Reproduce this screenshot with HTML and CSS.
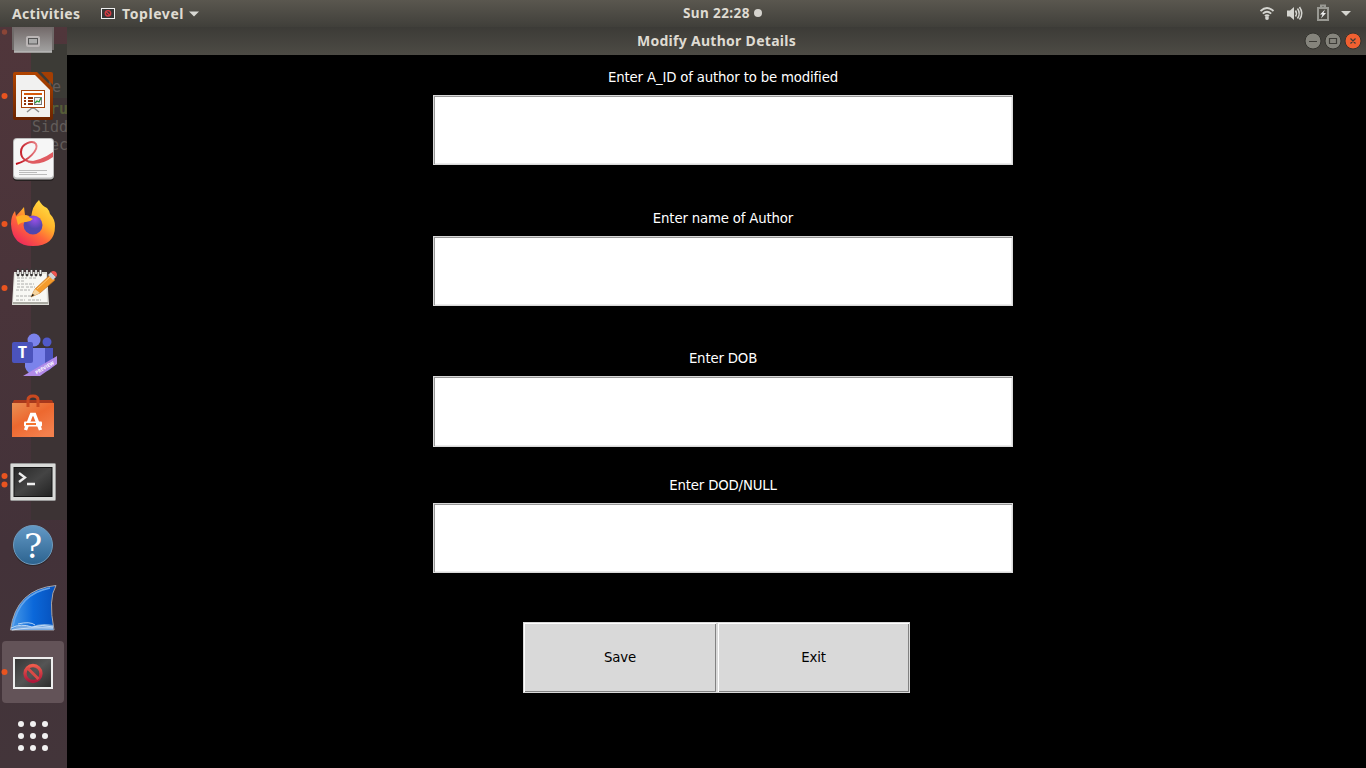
FILE: index.html
```html
<!DOCTYPE html>
<html lang="en">
<head>
<meta charset="utf-8">
<title>Modify Author Details</title>
<link rel="stylesheet" href="styles.css">
</head>
<body>
<header class="panel">
  <span class="activities">Activities</span>
  <svg width="14" height="11" viewBox="0 0 14 11"><rect x=".5" y=".5" width="13" height="10" fill="#363636" stroke="#eee"/><circle cx="7" cy="5.300" r="2.700" fill="none" stroke="#d33b43" stroke-width="1.400"/><path d="M5 3.500l4 4" stroke="#d33b43" stroke-width="1.200"/></svg>
  <span class="app-name">Toplevel</span>
  <svg width="10" height="6" viewBox="0 0 10 6"><path d="M0 .5h10L5 5.500z" fill="#d8d8d3"/></svg>
  <span class="clock">Sun 22:28</span><i class="notice"></i>
  <svg class="tray" width="100" height="27" viewBox="0 0 100 27">
    <g fill="none" stroke="#d5d5d0" stroke-width="1.8"><path d="M.5 11q6.500-6 13 0M2.800 13.700q4.200-3.800 8.400 0M4.900 16q2.100-1.700 4.200 0"/></g><circle cx="7" cy="18" r="1.900" fill="#d5d5d0"/>
    <path d="M27 10.500h3l4-3.500v13l-4-3.500h-3z" fill="#d5d5d0"/><path d="M35.500 10.500q2 3 0 6M37.500 8.500q3.400 5 0 10M39.500 7q4.600 6.500 0 12.500" fill="none" stroke="#d5d5d0" stroke-width="1.500"/>
    <path d="M58 8h10v12h-10zM61 7.500v-2h4v2" fill="none" stroke="#999993" stroke-width="2"/><path d="M65 9.500l-5 5h2.500l-1.500 4 5-5.500h-2.500z" fill="#eee"/>
    <path d="M81 11h10l-5 5z" fill="#d5d5d0"/>
  </svg>
</header>
<div class="desktop">
  <nav class="dock">
    <div class="backdrop"><span class="peek p1">de</span><span class="peek p2">ru</span><span class="peek p3">Sidd</span><span class="peek p4">ec</span></div>
    <div class="slot first"><svg width="67" height="37" viewBox="0 0 67 37">
      <defs><linearGradient id="drive" x2="0" y2="1"><stop stop-color="#726969"/><stop offset="1" stop-color="#a4a4a3"/></linearGradient></defs>
      <circle cx="4.500" cy="5" r="2.700" fill="#8b4537"/><path d="M12 0h42v23H12z" fill="#6f6a69"/><path d="M14 0h38v25.500H14z" fill="url(#drive)"/><path d="M14 25h38" stroke="#c4c4c2"/><rect x="26" y="9" width="14" height="11" rx="2" fill="#bbb6b6"/><rect x="28.500" y="11.500" width="9" height="5.500" fill="#aaa" stroke="#555"/></svg></div>
    <div class="slot"><svg width="67" height="64" viewBox="0 0 67 64">
      <circle class="dot" cx="4.500" cy="32" r="3"/>
      <defs><linearGradient id="lo" x2="0" y2="1"><stop stop-color="#b14400"/><stop offset="1" stop-color="#6b2400"/></linearGradient></defs>
      <path d="M15 8h22l16 16v30q0 2-2 2H15q-2 0-2-2V10q0-2 2-2z" fill="url(#lo)"/><path d="M41 8h10q2 0 2 2v11z" fill="#a33e03"/><path d="M16 11h19l15 15v27H16z" fill="#f1f1f0"/><path d="M33 43v2M32 44l-5 4m7-4 5 4" stroke="#8b8b8b" stroke-width="1.500" fill="none"/><rect x="21.500" y="26.500" width="23" height="17" fill="#fff" stroke="#a64208"/><path d="M24 30h18" stroke="#d6590b" stroke-width="2"/><path d="M24 34h2m2 0h5m-9 3h2m2 0h5m-9 3h2m2 0h5" stroke="#8f3108" stroke-width="2"/><rect x="34.500" y="33.500" width="7" height="7" fill="#eee" stroke="#777"/><path d="M35 39l2-2 2 1 2-4" fill="none" stroke="#209a33" stroke-width="1.300"/></svg></div>
    <div class="slot"><svg width="67" height="64" viewBox="0 0 67 64">
      <defs><linearGradient id="swoosh"><stop stop-color="#bd0714"/><stop offset="1" stop-color="#e77d82"/></linearGradient></defs>
      <rect x="13" y="11" width="41" height="42" rx="4" fill="#252020"/><rect x="13" y="10" width="41" height="41.500" rx="4" fill="#bbb"/><rect x="14" y="11" width="39" height="38.500" rx="3" fill="#f6f6f6"/><path d="M16 36C28 33 39 22 36 16c-3-4-15-1-15 8 0 7 6 10 13 10" fill="none" stroke="url(#swoosh)" stroke-width="2"/><path d="M26 33.500q14 0 27-9.500v5q-11 8-22 6.500z" fill="#e05b61"/><path d="M19 42.500h28m-28 2h18m-18 2h28" stroke="#bbb"/></svg></div>
    <div class="slot"><svg width="67" height="64" viewBox="0 0 67 64">
      <circle class="dot" cx="4.500" cy="32" r="3"/>
      <defs><linearGradient id="fx" x1=".9" y1="0" x2=".2" y2="1"><stop stop-color="#ffe94b"/><stop offset=".4" stop-color="#ffb329"/><stop offset=".65" stop-color="#ff653a"/><stop offset="1" stop-color="#ed245e"/></linearGradient><radialGradient id="globe" cx=".6" cy=".2"><stop stop-color="#9b50e9"/><stop offset="1" stop-color="#5146ae"/></radialGradient></defs>
      <path d="M39 8q2 5 8 8 2 2 3 6 5 5 5 12 0 20-22 20-21 0-22-22 0-8 4-13l1 5q3-3 8-9l1 8q4 0 6 3 1-12 8-18z" fill="url(#fx)"/><circle cx="33" cy="33" r="9.500" fill="url(#globe)"/><path d="M16 25q8-4 13 0l4 2q-3 3-7 3-5 0-8 3z" fill="#ffae27"/></svg></div>
    <div class="slot"><svg width="67" height="64" viewBox="0 0 67 64">
      <circle class="dot" cx="4.500" cy="32" r="3"/>
      <path d="M14 16h33l2 33H12z" fill="#deded8"/><path d="M15 18h31l1 28H13z" fill="#f8f8f4"/><path d="M13 47h35" stroke="#a9a9a1" stroke-width="2"/><path d="M17 22h10m2 0h8m-20 3h8m-8 3h17m-17 3h7m2 0h9m-19 3h14m-14 6h15m-15 4h9m3 0h13" stroke="#999" stroke-width=".8" stroke-dasharray="3 1"/><path d="M18 19v-5m4.500 5v-5m4.500 5v-5m4.500 5v-5m4.500 5v-5m4.500 5v-5" stroke="#3c3939" stroke-width="2.800" stroke-linecap="round"/><path d="M18 18v-4m4.500 4v-4m4.500 4v-4m4.500 4v-4m4.500 4v-4m4.500 4v-4" stroke="#eee" stroke-width="1.700"/><path d="M31 41l4-8L50 19l5 5-15 13z" fill="#f49b2c" stroke="#bb691a" stroke-width=".6"/><path d="M31 41l4-8 5 4z" fill="#f6d5a0"/><path d="M31 41l1.500-3 2 1z" fill="#111"/><path d="M37 33l14-13" stroke="#ffc978"/><path d="M48 19l3-3 5 5-3 3z" fill="#cbd0d5"/><path d="M51 16q2-2 5 0 2 3 0 5z" fill="#ef544f"/></svg></div>
    <div class="slot"><svg width="67" height="64" viewBox="0 0 67 64">
      <circle cx="34" cy="20" r="6.500" fill="#7b83eb"/><circle cx="47" cy="22" r="4.500" fill="#5059c9"/><path d="M40 28h13v18q-5 8-13 4z" fill="#4b53bc"/><path d="M25 28h20v17q-1 9-10 10-8-1-10-8z" fill="#7b83eb"/><rect x="12" y="22" width="21" height="21" rx="2" fill="#4b53bc"/><text class="team" x="22.500" y="38">T</text><path d="M23 56L57 36v8L40 56z" fill="#b18be8"/><text class="preview" transform="translate(36.500 54.500) rotate(-31)">PREVIEW</text></svg></div>
    <div class="slot"><svg width="67" height="64" viewBox="0 0 67 64">
      <defs><linearGradient id="bag" x2=".7" y2="1"><stop stop-color="#e99155"/><stop offset=".5" stop-color="#ed682f"/><stop offset="1" stop-color="#f3804d"/></linearGradient></defs>
      <path d="M14 16h38l2 4H12z" fill="#a7381c"/><path d="M12 19h42v34H12z" fill="url(#bag)"/><path d="M28 23v-7q0-4 5-4t5 4v7" fill="none" stroke="#c84920" stroke-width="3"/><path d="M25.500 46L31.500 30.500h3L40.500 46" fill="none" stroke="#fff" stroke-width="3.400"/><rect x="24" y="37.500" width="18" height="5" rx="1" fill="#fff"/><path d="M26 40h10" stroke="#f5772f" stroke-width="2"/></svg></div>
    <div class="slot"><svg width="67" height="64" viewBox="0 0 67 64">
      <circle class="dot" cx="4.500" cy="28" r="3"/><circle class="dot" cx="4.500" cy="36.500" r="3"/>
      <defs><linearGradient id="term" x2="1" y2="1"><stop stop-color="#282828"/><stop offset=".5" stop-color="#444"/><stop offset="1" stop-color="#222"/></linearGradient></defs>
      <rect x="10.500" y="15.500" width="45" height="37" rx="1" fill="#d9dad8" stroke="#999"/><rect x="14" y="19.500" width="38" height="29" fill="url(#term)" stroke="#151515"/><path d="M19 25l6 4.500-6 4.500M27 36h8" fill="none" stroke="#eee" stroke-width="2.300"/></svg></div>
    <div class="slot"><svg width="67" height="64" viewBox="0 0 67 64">
      <defs><linearGradient id="help" x2="0" y2="1"><stop stop-color="#6399c6"/><stop offset="1" stop-color="#2c638f"/></linearGradient></defs>
      <circle cx="33" cy="34" r="20" fill="#302629"/><circle cx="33" cy="33" r="19.500" fill="url(#help)" stroke="#719bbd"/><text class="question" x="33" y="45.500">?</text></svg></div>
    <div class="slot"><svg width="67" height="64" viewBox="0 0 67 64">
      <defs><linearGradient id="fin"><stop stop-color="#4a9be8"/><stop offset=".5" stop-color="#0b68da"/><stop offset="1" stop-color="#0650bb"/></linearGradient></defs>
      <path d="M10.500 54Q16 13 56 9.500q-8 13-2 44.500z" fill="url(#fin)" stroke="#a8a5a9"/><path d="M13 50Q19 18 50 12" fill="none" stroke="#65a6ed" stroke-width="1.500"/><path d="M11 54q10-7 20-3 10-5 22-2v5z" fill="#78a9e0"/><path d="M11 52q10-5 21-1 10-3 21 0M12 54q16-3 41-2M18 48q12-3 17 1" stroke="#dceafa" fill="none" stroke-width=".8"/></svg></div>
    <div class="slot"><svg width="67" height="64" viewBox="0 0 67 64">
      <defs><linearGradient id="screen" x2="1" y2="1"><stop stop-color="#343434"/><stop offset=".5" stop-color="#555"/><stop offset="1" stop-color="#2b2b2b"/></linearGradient><linearGradient id="stop" x2="0" y2="1"><stop stop-color="#ed5a4b"/><stop offset="1" stop-color="#ae173b"/></linearGradient></defs>
      <rect x="2" y="1" width="62" height="62" rx="4" fill="#635358"/><circle class="dot" cx="4.500" cy="32" r="3"/><rect x="14" y="18" width="38" height="30" fill="url(#screen)" stroke="#eee" stroke-width="2"/><circle cx="33" cy="33.500" r="8" fill="none" stroke="url(#stop)" stroke-width="3.300"/><path d="M27.500 28l11 11" stroke="#d94a46" stroke-width="3"/></svg></div>
    <div class="slot"><svg width="67" height="64" viewBox="0 0 67 64" fill="#f2f1f1"><circle cx="21" cy="20" r="3"/><circle cx="33" cy="20" r="3"/><circle cx="45" cy="20" r="3"/><circle cx="21" cy="32" r="3"/><circle cx="33" cy="32" r="3"/><circle cx="45" cy="32" r="3"/><circle cx="21" cy="44" r="3"/><circle cx="33" cy="44" r="3"/><circle cx="45" cy="44" r="3"/></svg></div>
  </nav>
  <main class="window">
    <div class="titlebar"><h1 class="title">Modify Author Details</h1>
      <svg width="63" height="28" viewBox="0 0 63 28"><g stroke="#34342f"><circle cx="10" cy="14" r="8" fill="#85847c"/><circle cx="30" cy="14" r="8" fill="#85847c"/><circle cx="50" cy="14" r="8" fill="#f06031"/></g><path d="M6 14.500h8M26.500 11.500h7v5h-7zM47.500 11.500l5 5m0-5l-5 5" stroke="#3d3c37" stroke-width="1.200" fill="none"/></svg>
    </div>
    <form class="form">
      <label class="field"><span>Enter A_ID of author to be modified</span><input class="entry" type="text"></label>
      <label class="field second"><span>Enter name of Author</span><input class="entry" type="text"></label>
      <label class="field third"><span>Enter DOB</span><input class="entry tall" type="text"></label>
      <label class="field fourth"><span>Enter DOD/NULL</span><input class="entry" type="text"></label>
      <div class="actions"><button class="button" type="button">Save</button><button class="button" type="button">Exit</button></div>
    </form>
  </main>
</div>
</body>
</html>
```
FILE: styles.css
```css
* { box-sizing: border-box; }
body { margin: 0; width: 1366px; height: 768px; overflow: hidden; background: #000; font-family: "DejaVu Sans", sans-serif; }
svg { display: block; flex: none; }
.panel { height: 27px; display: flex; align-items: center; background: linear-gradient(#5a574f, #403f3a); color: #dfdbd2; font: bold 14px "Noto Sans", sans-serif; white-space: nowrap; }
.activities { margin-left: 12px; width: 89px; letter-spacing: .33px; }
.app-name { margin-left: 7px; width: 67px; letter-spacing: .58px; }
.clock { margin-left: 484px; width: 71px; padding-bottom: 2px; font-size: 13.5px; letter-spacing: .4px; }
.notice { width: 8px; height: 8px; margin-bottom: 1px; border-radius: 50%; background: #d5d3ce; }
.tray { margin-left: 498px; }
.desktop { display: flex; height: 741px; }
.dock { position: relative; width: 67px; flex: none; background: #43333a; }
.backdrop { position: absolute; inset: 0; background: linear-gradient(#3c3b36, #3c3b36) 31px 17px / 36px 54px no-repeat, linear-gradient(#3c3334, #3c3334) 31px 71px / 36px 422px no-repeat, linear-gradient(#50363b, #433239 70%, #43353a); font: 15px/18px "DejaVu Sans Mono", monospace; overflow: hidden; }
.peek { position: absolute; color: #625c5a; }
.p1 { left: 43px; top: 51px; }
.p2 { left: 50px; top: 73px; color: #555c37; font-weight: bold; }
.p3 { left: 32px; top: 91px; }
.p4 { left: 50px; top: 109px; }
.slot { position: relative; height: 64px; }
.first { height: 37px; }
.dot { fill: #e95420; }
.team { fill: #fff; font: bold 16px "Open Sans", sans-serif; text-anchor: middle; }
.preview { fill: #fff; font: bold 4.8px "Open Sans", sans-serif; }
.question { fill: #fff; font: 34px "DejaVu Serif", serif; text-anchor: middle; }
.window { width: 1299px; background: #000; }
.titlebar { height: 28px; display: grid; grid-template-columns: 1fr 63px; align-items: center; background: linear-gradient(#3c3b37, #4d4b45); color: #dfdbd2; }
.title { margin: 0 0 2px 63px; text-align: center; font: bold 14px "Noto Sans", sans-serif; letter-spacing: .29px; }
.form { display: flex; flex-direction: column; width: 580px; margin-left: 366px; padding-top: 14px; }
.field { display: flex; flex-direction: column; align-items: center; color: #fff; font-size: 13.3px; letter-spacing: -.17px; line-height: 18px; gap: 8px; white-space: nowrap; }
.second { margin-top: 45px; }
.third { margin-top: 44px; }
.fourth { margin-top: 30px; }
.entry { display: block; width: 580px; height: 70px; padding: 0; border: 1px solid #d9d9d9; background: #fff; box-shadow: inset 1px 1px #999, inset -1px -1px #ececec; outline: 0; border-radius: 0; }
.tall { height: 71px; }
.actions { display: flex; margin: 49px 0 0 90px; }
.button { width: 194px; height: 71px; border: 1px solid #d9d9d9; padding: 0; background: #d9d9d9; color: #000; font: 13.3px "DejaVu Sans", sans-serif; letter-spacing: -.14px; box-shadow: inset 1px 1px #fff, inset -1px -1px #828282; }
.button + .button { width: 193px; }
```
